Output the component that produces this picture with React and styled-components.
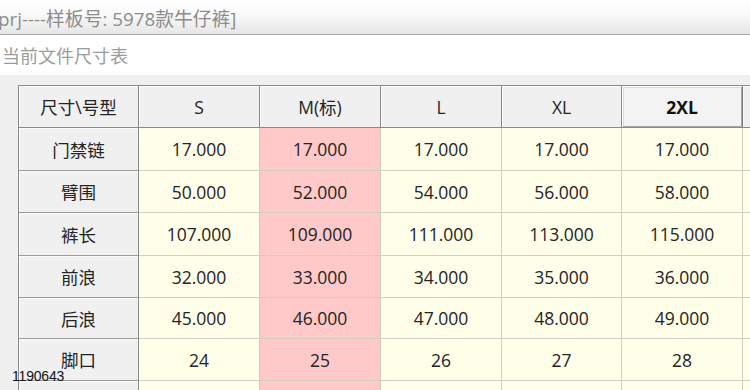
import React from "react";
import styled, { createGlobalStyle, css } from "styled-components";

const Global = createGlobalStyle`
  html, body { margin: 0; padding: 0; background: #ffffff; }
  body { width: 750px; height: 390px; overflow: hidden; }
  #root { width: 750px; height: 390px; }
`;

const FONT = `"Open Sans", "Noto Sans CJK SC", sans-serif`;

const Window = styled.div`
  position: relative;
  width: 750px;
  height: 390px;
  overflow: hidden;
  display: flex;
  flex-direction: column;
  font-family: ${FONT};
  background: #ffffff;
`;

const TitleBar = styled.div`
  height: 35px;
  flex: none;
  display: flex;
  align-items: center;
  padding-top: 2px;
  box-sizing: border-box;
  background: linear-gradient(#ffffff 0%, #fafafa 40%, #e6e6e6 100%);
  border-bottom: 1px solid #a9a9a9;
  overflow: hidden;
`;

const TitleText = styled.span`
  margin-left: -2px;
  font-size: 18.8px;
  color: #8c8c8c;
  white-space: nowrap;
`;

const SubHeader = styled.div`
  height: 40px;
  flex: none;
  display: flex;
  align-items: center;
  padding-left: 2px;
  font-size: 18px;
  color: #9c9c9c;
  background: #ffffff;
`;

const Panel = styled.div`
  flex: 1;
  min-height: 0;
  background: #f0f0f0;
  padding: 10px 0 0 18px;
  overflow: hidden;
`;

const Grid = styled.div`
  display: grid;
  grid-template-columns: 120px 121px 121px 121px 120px 121px 121px;
  grid-template-rows: 42px 43px 42px 43px 42px 41px 42px 42px;
  width: max-content;
  border-left: 1px solid #8a8a8a;
  border-top: 1px solid #8a8a8a;
`;

const kinds = {
  corner: css`
    background: #f0f0f0;
    border-right: 1px solid #8a8a8a;
    border-bottom: 1px solid #8a8a8a;
    box-shadow: inset 1px 1px 0 #fbfbfb;
  `,
  colHead: css`
    background: #f0f0f0;
    border-right: 1px solid #8a8a8a;
    border-bottom: 1px solid #8a8a8a;
    box-shadow: inset 1px 1px 0 #fbfbfb;
  `,
  colHeadActive: css`
    background: #f3f3f3;
    border-right: 1px solid #7a7a7a;
    border-bottom: 1px solid #8a8a8a;
    box-shadow: inset 1px 1px 0 #ffffff, inset -1px -1px 0 #a8a8a8,
      inset 2px 2px 0 #dcdcdc;
    font-weight: 700;
    color: #111;
  `,
  rowHead: css`
    background: #f0f0f0;
    border-right: 1px solid #8a8a8a;
    border-bottom: 1px solid #9a9a9a;
    box-shadow: inset 1px 1px 0 #fbfbfb;
  `,
  data: css`
    background: #fffee9;
    border-right: 1px solid #cfcfc6;
    border-bottom: 1px solid #cfcfc6;
  `,
  std: css`
    background: #ffc9c9;
    border-right: 1px solid #cfcfc6;
    border-bottom: 1px solid #cfcfc6;
  `,
};

const Cell = styled.div`
  box-sizing: border-box;
  display: flex;
  align-items: center;
  justify-content: center;
  font-size: 17.5px;
  color: #242424;
  white-space: nowrap;
  overflow: hidden;
  ${(p) => kinds[p.$kind]}
`;

const Watermark = styled.div`
  position: absolute;
  left: 12px;
  top: 369px;
  font-family: "Liberation Sans", Arial, sans-serif;
  font-size: 14px;
  line-height: 15px;
  letter-spacing: -0.2px;
  color: #111111;
`;

const sizes = ["S", "M(标)", "L", "XL", "2XL", "3XL"];
const stdIndex = 1;
const activeIndex = 4;

const rows = [
  { label: "门禁链", values: ["17.000", "17.000", "17.000", "17.000", "17.000", ""] },
  { label: "臂围", values: ["50.000", "52.000", "54.000", "56.000", "58.000", ""] },
  { label: "裤长", values: ["107.000", "109.000", "111.000", "113.000", "115.000", ""] },
  { label: "前浪", values: ["32.000", "33.000", "34.000", "35.000", "36.000", ""] },
  { label: "后浪", values: ["45.000", "46.000", "47.000", "48.000", "49.000", ""] },
  { label: "脚口", values: ["24", "25", "26", "27", "28", ""] },
  { label: "", values: ["", "", "", "", "", ""] },
];

export default function App() {
  return (
    <>
      <Global />
      <Window>
        <TitleBar>
          <TitleText>prj----样板号: 5978款牛仔裤]</TitleText>
        </TitleBar>
        <SubHeader>当前文件尺寸表</SubHeader>
        <Panel>
          <Grid>
            <Cell $kind="corner">尺寸\号型</Cell>
            {sizes.map((s, i) => (
              <Cell key={s} $kind={i === activeIndex ? "colHeadActive" : "colHead"}>
                {i === sizes.length - 1 ? "" : s}
              </Cell>
            ))}
            {rows.map((r, ri) => (
              <React.Fragment key={ri}>
                <Cell $kind="rowHead">{r.label}</Cell>
                {r.values.map((v, ci) => (
                  <Cell key={ci} $kind={ci === stdIndex ? "std" : "data"}>
                    {v}
                  </Cell>
                ))}
              </React.Fragment>
            ))}
          </Grid>
        </Panel>
        <Watermark>1190643</Watermark>
      </Window>
    </>
  );
}
